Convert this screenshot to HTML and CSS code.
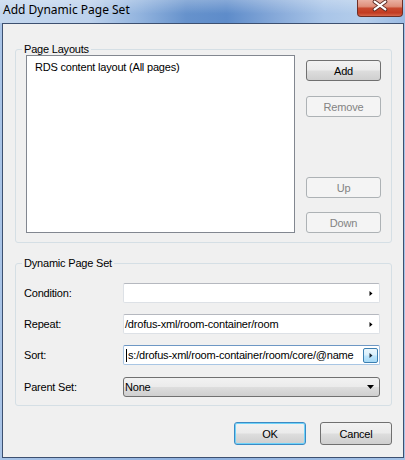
FILE: index.html
```html
<!DOCTYPE html>
<html>
<head>
<meta charset="utf-8">
<link rel="stylesheet" href="styles.css">
</head>
<body>
<div class="window">
  <div class="titlebar">
    <span class="title">Add Dynamic Page Set</span>
    <div class="close">
      <svg width="46" height="17" viewBox="0 0 46 17">
        <path d="M18 1.5 L29 9.5 M29 1.5 L18 9.5" stroke="#5a2a24" stroke-width="4" stroke-linecap="round" fill="none"/>
        <path d="M18 1.5 L29 9.5 M29 1.5 L18 9.5" stroke="#ffffff" stroke-width="2.2" stroke-linecap="round" fill="none"/>
      </svg>
    </div>
  </div>
  <div class="client">
    <fieldset class="group">
      <legend>Page Layouts</legend>
      <div class="layouts-body">
        <div class="listbox">
          <div class="list-item">RDS content layout (All pages)</div>
        </div>
        <div class="side-buttons">
          <button class="btn">Add</button>
          <button class="btn btn-remove" disabled>Remove</button>
          <button class="btn btn-up" disabled>Up</button>
          <button class="btn btn-down" disabled>Down</button>
        </div>
      </div>
    </fieldset>
    <fieldset class="group group-set">
      <legend>Dynamic Page Set</legend>
      <div class="form">
        <label class="label">Condition:</label>
        <div class="field">
          <span class="value"></span>
          <span class="arrow-btn"><svg width="4" height="7" viewBox="0 0 4 7"><path d="M0.5 1 L3.5 3.5 L0.5 6 Z" fill="#000"/></svg></span>
        </div>
        <label class="label">Repeat:</label>
        <div class="field">
          <span class="value">/drofus-xml/room-container/room</span>
          <span class="arrow-btn"><svg width="4" height="7" viewBox="0 0 4 7"><path d="M0.5 1 L3.5 3.5 L0.5 6 Z" fill="#000"/></svg></span>
        </div>
        <label class="label">Sort:</label>
        <div class="field field-focus">
          <span class="value"><span class="caret"></span>s:/drofus-xml/room-container/room/core/@name</span>
          <span class="arrow-btn arrow-hot"><svg width="4" height="7" viewBox="0 0 4 7"><path d="M0.5 1 L3.5 3.5 L0.5 6 Z" fill="#1a2a3a"/></svg></span>
        </div>
        <label class="label label-combo">Parent Set:</label>
        <div class="combo">
          <span>None</span>
          <svg width="7" height="4" viewBox="0 0 7 4"><path d="M0 0 L7 0 L3.5 4 Z" fill="#000"/></svg>
        </div>
      </div>
    </fieldset>
    <div class="dialog-buttons">
      <button class="btn btn-dialog btn-default">OK</button>
      <button class="btn btn-dialog">Cancel</button>
    </div>
  </div>
</div>
</body>
</html>
```
FILE: styles.css
```css
* { box-sizing: border-box; }

body {
  margin: 0;
  font-family: "Liberation Sans", Arial, sans-serif;
  font-size: 11px;
  letter-spacing: -0.2px;
  color: #000;
}

.window {
  width: 405px;
  height: 460px;
  display: flex;
  flex-direction: column;
  overflow: hidden;
  background: linear-gradient(90deg, #a9c4e7 0%, #8eb0de 50%, #a5c2e6 100%);
}

.titlebar {
  height: 23px;
  flex: none;
  display: flex;
  justify-content: space-between;
  align-items: flex-start;
  background:
    linear-gradient(180deg, rgba(255,255,255,0.25) 0%, rgba(255,255,255,0) 60%),
    linear-gradient(90deg, #c4d7ee 0%, #bcd1ec 22%, #94b5df 34%, #6692cc 46%, #5e8cca 56%, #86a9d9 68%, #a9c5e8 80%, #b4cdeb 90%, #9bbbe3 100%);
}

.title {
  font-family: "Noto Sans", "DejaVu Sans", sans-serif;
  font-size: 12px;
  letter-spacing: 0;
  line-height: 16px;
  padding: 2px 0 0 3px;
  color: #000;
}

.close {
  width: 46px;
  height: 17px;
  margin-right: 2px;
  border: 1px solid #6e2e25;
  border-top: none;
  border-radius: 0 0 4px 4px;
  background: linear-gradient(180deg, #eab0a2 0%, #df8f7b 40%, #c8492f 52%, #c23b22 80%, #d5664b 100%);
  display: flex;
  justify-content: center;
}

.close svg { display: block; margin-left: -1px; }

.client {
  flex: 1;
  margin: 0 1px 2px 2px;
  border: 1px solid #3d5070;
  background: #f0f0f0;
  padding: 19px 11px 0 12px;
}

.group {
  margin: 0;
  padding: 0;
  min-width: 0;
  border: 1px solid #d5dfe5;
  border-radius: 3px;
}

.group legend {
  margin-left: 6px;
  padding: 0 2px;
  line-height: 12px;
  font-size: 11px;
}

.group-set { margin-top: 14px; }

.layouts-body {
  display: flex;
  gap: 11px;
  padding: 0 9px 9px 10px;
}

.listbox {
  width: 269px;
  height: 178px;
  border: 1px solid #828790;
  background: #fff;
  padding: 5px 0 0 8px;
}

.list-item { line-height: 13px; }

.side-buttons {
  display: flex;
  flex-direction: column;
  padding-top: 5px;
}

.btn {
  width: 75px;
  height: 21px;
  padding: 0;
  font-family: "Liberation Sans", Arial, sans-serif;
  font-size: 11px;
  letter-spacing: -0.2px;
  color: #000;
  border: 1px solid #707070;
  border-radius: 3px;
  background: linear-gradient(180deg, #f2f2f2 0%, #ebebeb 48%, #dddddd 52%, #cfcfcf 100%);
}

.btn:disabled {
  color: #838383;
  border-color: #adb2b5;
  background: #f4f4f4;
}

.btn-remove { margin-top: 15px; }
.btn-up { margin-top: auto; }
.btn-down { margin-top: 14px; }

.form {
  display: grid;
  grid-template-columns: 99px 257px;
  row-gap: 11px;
  align-items: center;
  padding: 14px 9px 8px 8px;
}

.label { line-height: 13px; }
.label-combo { margin-top: 1px; }

.field {
  height: 20px;
  display: flex;
  align-items: center;
  justify-content: space-between;
  background: #fff;
  border: 1px solid #dde1e6;
  border-top-color: #b5b8bf;
  border-radius: 2px;
  overflow: hidden;
}

.field-focus {
  border-color: #a9c6e4;
  border-top-color: #6d97c4;
}

.value {
  flex: 1;
  min-width: 0;
  padding-left: 1px;
  white-space: nowrap;
  overflow: hidden;
  display: flex;
  align-items: center;
  line-height: 13px;
}

.caret {
  flex: none;
  width: 1px;
  height: 13px;
  background: #000;
  margin-right: 1px;
  margin-left: 1px;
}

.arrow-btn {
  flex: none;
  width: 15px;
  height: 15px;
  margin-right: 1px;
  display: flex;
  align-items: center;
  justify-content: center;
  border: 1px solid transparent;
  border-radius: 2px;
}

.arrow-btn svg { display: block; }

.arrow-hot {
  border-color: #3c7fb1;
  background: linear-gradient(180deg, #eaf6fd 0%, #d9f0fc 48%, #bee6fd 52%, #a7d9f5 100%);
}

.combo {
  height: 20px;
  margin-top: 1px;
  display: flex;
  align-items: center;
  justify-content: space-between;
  padding: 0 5px 0 1px;
  border: 1px solid #707070;
  border-radius: 3px;
  background: linear-gradient(180deg, #f2f2f2 0%, #ebebeb 48%, #dddddd 52%, #cfcfcf 100%);
}

.combo svg { display: block; }

.dialog-buttons {
  display: flex;
  justify-content: flex-end;
  gap: 14px;
  margin-top: 16px;
}

.btn-dialog {
  width: 72px;
  height: 23px;
}

.btn-default {
  border-color: #3c8ac4;
  box-shadow: inset 0 0 0 1px #6fd3f9;
}
```
